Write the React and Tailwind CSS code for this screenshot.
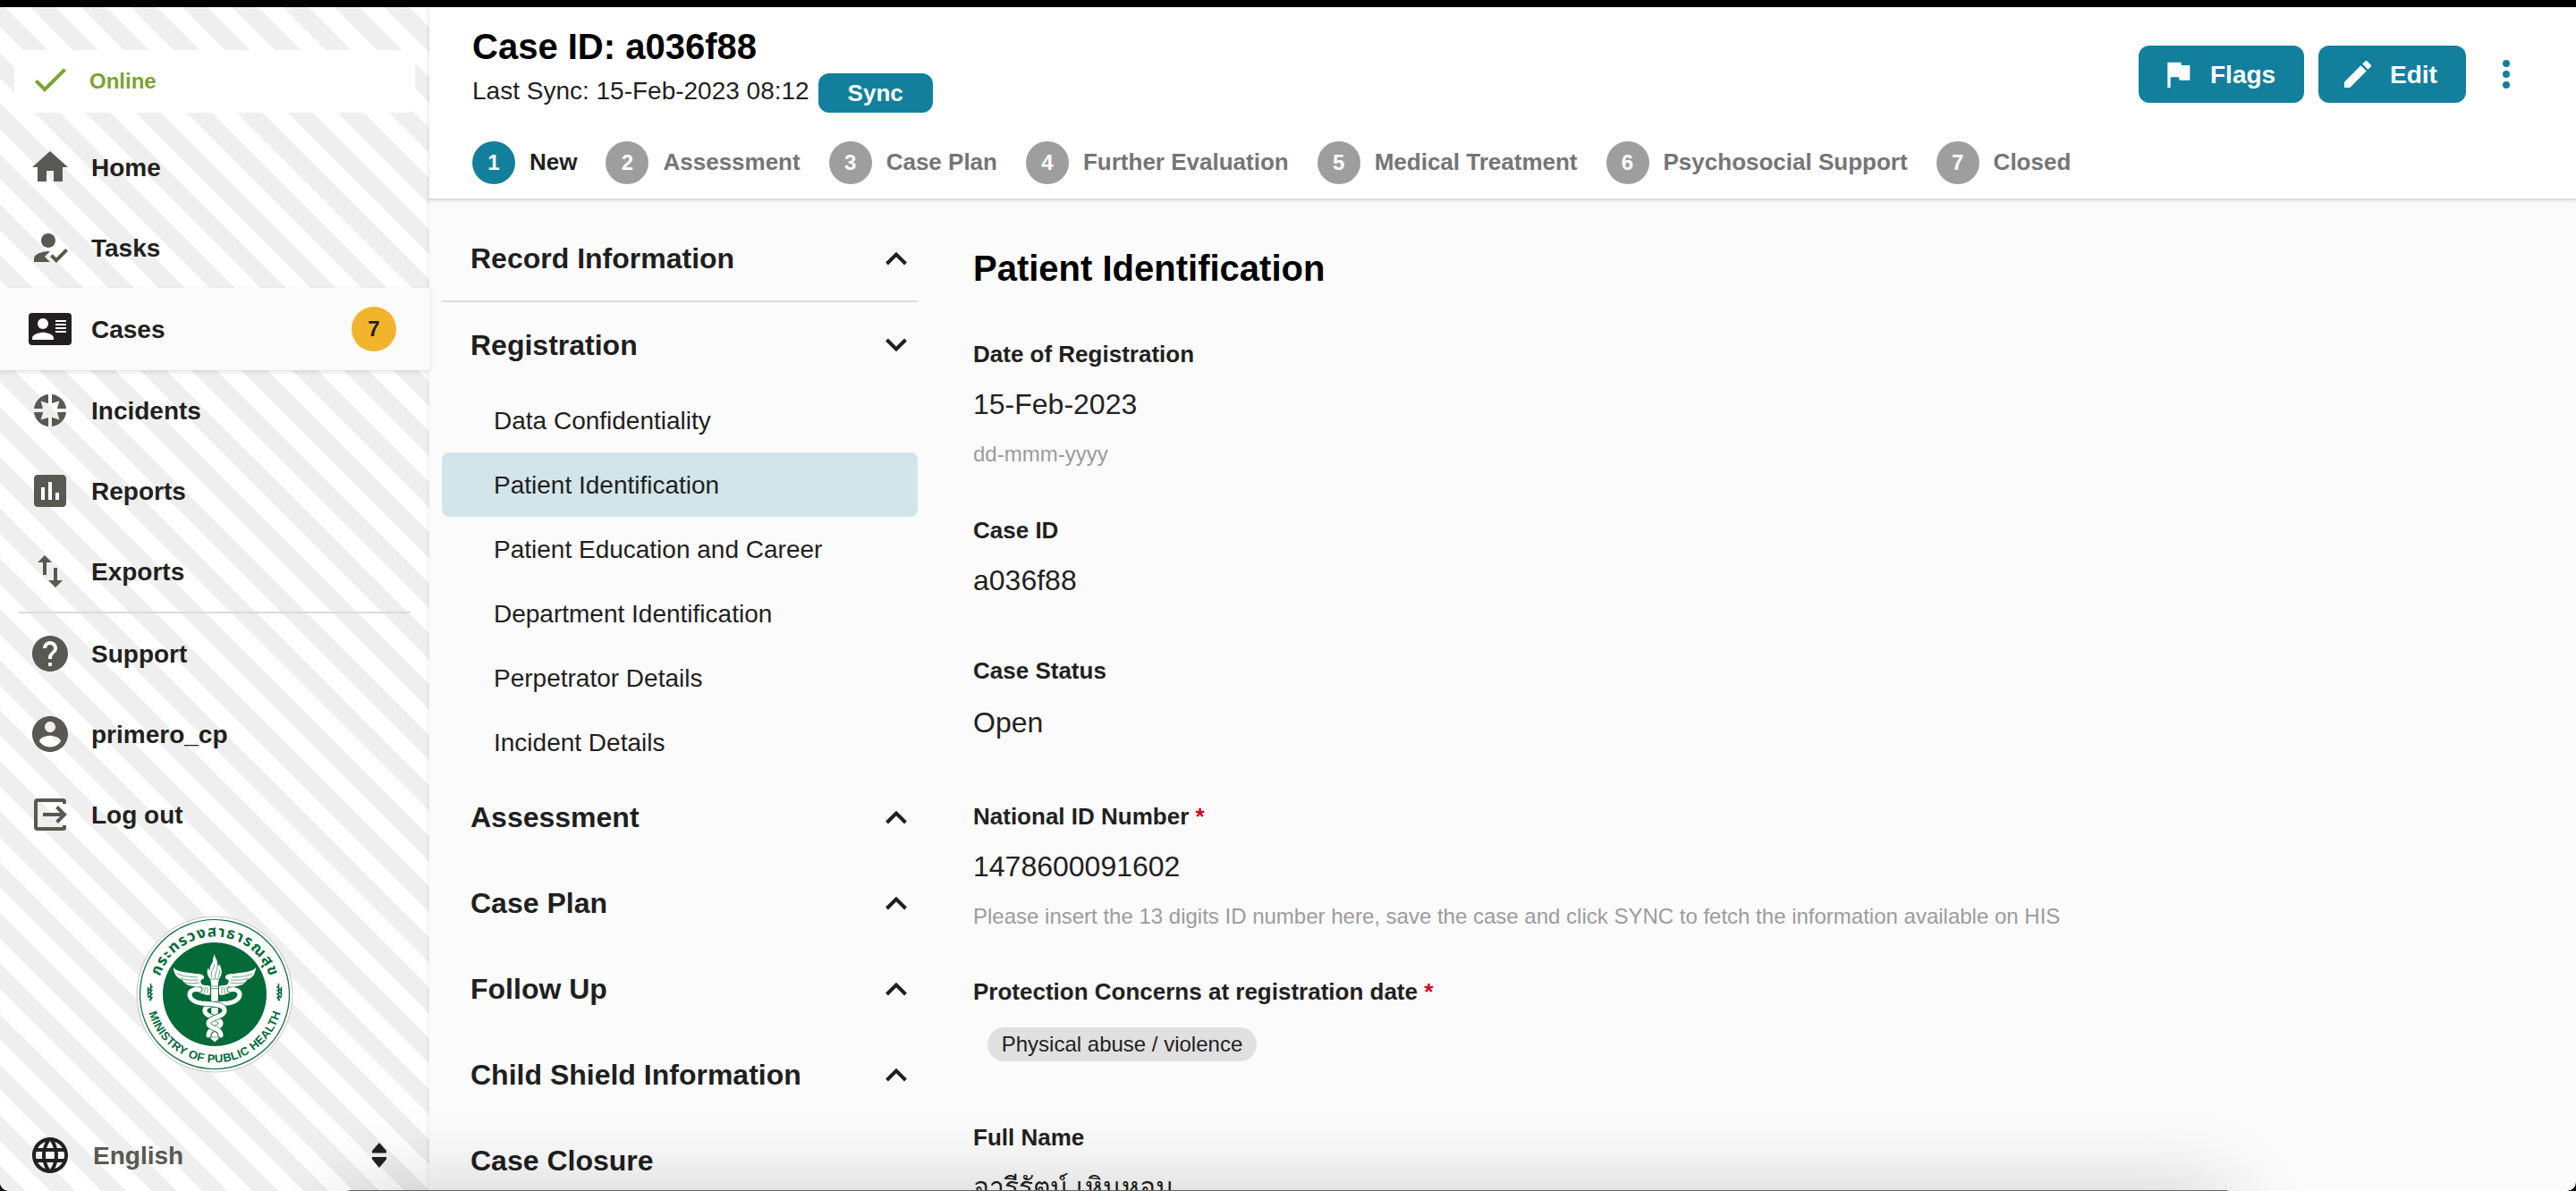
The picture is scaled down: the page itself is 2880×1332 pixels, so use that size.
import React from "react";

const nav = [
  { label: "Home", d: "M10 20v-6h4v6h5v-8h3L12 3 2 12h3v8z" },
  { label: "Tasks", d: "M9 17l3-2.94c-.39-.04-.68-.06-1-.06-2.67 0-8 1.34-8 4v2h9l-3-3zm2-5c2.210 0 4-1.790 4-4s-1.790-4-4-4-4 1.790-4 4 1.790 4 4 4M15.470 20.500L12 17l1.400-1.410 2.070 2.080 5.130-5.170 1.400 1.410z" },
  { label: "Cases", active: true },
  { label: "Incidents", burst: true },
  { label: "Reports", d: "M19 3H5c-1.100 0-2 .9-2 2v14c0 1.100.9 2 2 2h14c1.100 0 2-.9 2-2V5c0-1.100-.9-2-2-2zM9 17H7v-7h2v7zm4 0h-2V7h2v10zm4 0h-2v-4h2v4z" },
  { label: "Exports", d: "M9 3L5 6.990h3V14h2V6.990h3L9 3zm7 14.010V10h-2v7.010h-3L15 21l4-3.990h-3z" },
];
const nav2 = [
  { label: "Support", d: "M12 2C6.480 2 2 6.480 2 12s4.480 10 10 10 10-4.480 10-10S17.520 2 12 2zm1 17h-2v-2h2v2zm2.070-7.750l-.9.920C13.450 12.900 13 13.500 13 15h-2v-.5c0-1.100.45-2.100 1.170-2.830l1.240-1.260c.37-.36.59-.86.59-1.410 0-1.100-.9-2-2-2s-2 .9-2 2H8c0-2.210 1.790-4 4-4s4 1.790 4 4c0 .88-.36 1.680-.93 2.250z" },
  { label: "primero_cp", d: "M12 2C6.480 2 2 6.480 2 12s4.480 10 10 10 10-4.480 10-10S17.520 2 12 2zm0 3c1.660 0 3 1.340 3 3s-1.340 3-3 3-3-1.340-3-3 1.340-3 3-3zm0 14.200c-2.500 0-4.710-1.280-6-3.220.03-1.990 4-3.080 6-3.080 1.990 0 5.970 1.090 6 3.080-1.290 1.940-3.500 3.220-6 3.220z" },
  { label: "Log out", logout: true },
];

function NavIcon({ item }) {
  if (item.active)
    return (
      <svg viewBox="0 0 48 36" className="h-9 w-12 shrink-0">
        <rect width="48" height="36" rx="4" fill="#231f20" />
        <circle cx="16" cy="12" r="6" fill="#fff" />
        <path d="M4 30v-2c0-4 8-6.200 12-6.200s12 2.200 12 6.200v2z" fill="#fff" />
        <path d="M30 8h12v2H30zm0 4h12v2H30zm0 4h12v2H30zm0 4h12v2H30z" fill="#fff" />
      </svg>
    );
  if (item.burst)
    return (
      <svg viewBox="0 0 36 36" className="mx-1.5 size-9 shrink-0" fill="#595952">
        {[0, 90, 180, 270].map((a) => (
          <path key={a} transform={`rotate(${a} 18 18)`} d="M16 0A18 18 0 0 0 0 16L10 16 7.600 7.600 16 10.200z" />
        ))}
      </svg>
    );
  if (item.logout)
    return (
      <svg viewBox="0 0 38 36" className="ml-1.5 mr-1 h-9 w-[38px] shrink-0" fill="none" stroke="#595952" strokeWidth="4">
        <path d="M34 6V3.500Q34 2 32.500 2H4Q2 2 2 4V32Q2 34 4 34H32.500Q34 34 34 32.500V30" />
        <path d="M10 18H34M25.500 9.500L34 18L25.500 26.500" />
      </svg>
    );
  return (
    <svg viewBox="0 0 24 24" className="size-12 shrink-0" fill="#595952">
      <path d={item.d} />
    </svg>
  );
}

function NavItem({ item }) {
  return (
    <div className={item.active
      ? "flex h-[92px] items-center bg-[#fbfbfb] pl-8 pr-[37px] shadow-[0_2px_5px_rgba(0,0,0,0.12)] relative"
      : "flex h-[90px] items-center pl-8"}>
      <NavIcon item={item} />
      <span className="ml-[22px] pt-0.5 text-[28px] font-bold leading-none">{item.label}</span>
      {item.active && (
        <span className="ml-auto flex size-[50px] items-center justify-center rounded-full bg-[#f2b42d] text-2xl font-bold">7</span>
      )}
    </div>
  );
}

const snakes = [
  "M104 83C119 80 119 96 102 98C84 99 75 100 76 107C77 114 95 114 94 121C93 127 80 125 80 134",
  "M70 83C55 80 55 96 72 98C90 99 99 100 98 107C97 114 79 114 80 121C81 127 94 125 94 134",
];

function Seal() {
  return (
    <svg viewBox="0 0 176 176" className="size-[176px]">
      <defs>
        <path id="seal-top" d="M23.500 88A64.500 64.500 0 0 1 152.500 88" />
        <path id="seal-bottom" d="M11.500 88A76.500 76.500 0 0 0 164.500 88" />
      </defs>
      <circle cx="88" cy="88" r="87" fill="#fff" stroke="#b5b5b5" strokeWidth="0.8" />
      <circle cx="88" cy="88" r="83.500" fill="none" stroke="#046a38" strokeWidth="1.200" />
      <circle cx="88" cy="88" r="58" fill="#046a38" />
      <g fill="#046a38" fontWeight="bold" textAnchor="middle">
        <text fontSize="17" fontFamily="'Noto Sans Thai', 'Noto Sans', sans-serif">
          <textPath href="#seal-top" startOffset="50%" textLength="162">กระทรวงสาธารณสุข</textPath>
        </text>
        <text fontSize="13" fontFamily="Liberation Sans Narrow, Liberation Sans, sans-serif">
          <textPath href="#seal-bottom" startOffset="50%" textLength="198">MINISTRY OF PUBLIC HEALTH</textPath>
        </text>
      </g>
      <g stroke="#046a38" strokeWidth="1.500" fill="none">
        <path d="M16.500 76V95M13.500 80V91M18.500 79L14 84M18.500 83L13 88M18.500 87L14 92M18.500 91L15 95" />
        <path d="M159.500 76V95M162.500 80V91M157.500 79L162 84M157.500 83L163 88M157.500 87L162 92M157.500 91L161 95" />
      </g>
      <g transform="translate(1 0)">
        <path d="M83 75L82 71C78 66 78 62 80 58C80 60 81 61 82 61C81 55 85 54 85 50C85 47 86 45 87 43C87 46 88 47 89 49C91 53 89 55 91 57C92 56 91.500 54 91 53C94 57 96 62 94 67L92 71 91 75z" fill="#fff" />
        <path d="M84 69C81 63 87 60 86.500 54M88 70C86 64 91 62 89.500 57M91 69C92 66 93 64 92.500 61M82 71H92" fill="none" stroke="#046a38" strokeWidth="0.600" />
        {["", "matrix(-1 0 0 1 174 0)"].map((t) => (
          <g key={t} transform={t || undefined}>
            <path d="M41 58C45 64 57 63 65 65C71 65 76 66 75 70C73 72 70 71 72 76C74 79 78 77 82 79V88C80 90 76 88 72 87C68 86 65 82 64 79C57 79 52 75 51 72C45 70 41 65 41 58z" fill="#fff" />
            <path d="M45 65C53 69 60 68 68 69M49 70C57 73 62 72 69 72M53 75C60 76 64 76 70 75M67 82C70 81 71 80 73 79M70 86L75 80M75 87L77 80M79 87V80" fill="none" stroke="#046a38" strokeWidth="0.600" />
          </g>
        ))}
        <path d="M83 75H91L90.500 135 92 137 87 141.500 82 137 83.500 135z" fill="#fff" />
        <path d="M83 79H91M83 81.500H91M82.500 136H91.500" stroke="#046a38" strokeWidth="0.600" />
        {snakes.map((d) => (
          <g key={d} fill="none" strokeLinecap="round">
            <path d={d} stroke="#046a38" strokeWidth="6.400" />
            <path d={d} stroke="#fff" strokeWidth="5" />
          </g>
        ))}
      </g>
    </svg>
  );
}

const steps = ["New", "Assessment", "Case Plan", "Further Evaluation", "Medical Treatment", "Psychosocial Support", "Closed"];

function Chevron({ down }) {
  return (
    <svg viewBox="0 0 24 16" className="h-4 w-6" fill="none" stroke="#1f1f1f" strokeWidth="4">
      <path d={down ? "M1.500 2L12 12.500L22.500 2" : "M1.500 14L12 3.500L22.500 14"} />
    </svg>
  );
}

function Group({ label, down, className = "h-24" }) {
  return (
    <div className={`flex items-center justify-between pl-8 pr-3 ${className}`}>
      <span className="text-[32px] font-bold leading-none">{label}</span>
      <Chevron down={down} />
    </div>
  );
}

const pages = ["Data Confidentiality", "Patient Identification", "Patient Education and Career", "Department Identification", "Perpetrator Details", "Incident Details"];

function Label({ children, required }) {
  return (
    <div className="h-8 text-[26px] font-bold leading-8 text-[#231f20]">
      {children}
      {required && <span className="text-[#d0021b]"> *</span>}
    </div>
  );
}

function Field({ label, value, help, required, className, valueClass = "mt-5 text-[32px]" }) {
  return (
    <div className={className}>
      <Label required={required}>{label}</Label>
      <div className={`h-10 leading-10 text-[#231f20] ${valueClass}`}>{value}</div>
      {help && <div className="mt-5 h-8 text-2xl leading-8 text-[#9b9b9b]">{help}</div>}
    </div>
  );
}

export default function App() {
  return (
    <div className="relative flex h-[1332px] w-[2880px] flex-col overflow-hidden bg-[#070a14] font-['Liberation_Sans',Arial,sans-serif] text-[#1f1f1f]">
      <div className="h-2 shrink-0 bg-black" />
      <div className="flex min-h-0 flex-1 overflow-hidden rounded-b-[10px] bg-[#fbfbfb]">
        <aside className="flex w-[480px] shrink-0 flex-col bg-[repeating-linear-gradient(45deg,#efefef_0_20px,#fff_20px_40px)] text-[#231f20]">
          <div className="mx-4 mt-12 flex h-[70px] items-center rounded-[10px] bg-white pl-4 text-[#7ba32f]">
            <svg viewBox="0 0 24 24" className="mb-1 size-12" fill="#7ba32f">
              <path d="M9 16.170L4.830 12l-1.420 1.410L9 19 21 7l-1.410-1.410z" />
            </svg>
            <span className="ml-5 text-2xl font-bold">Online</span>
          </div>
          <div className="mt-4">
            {nav.map((n) => <NavItem key={n.label} item={n} />)}
          </div>
          <div className="ml-[21px] mr-[21px] h-0.5 bg-[#dcdcd6]" />
          <div>{nav2.map((n) => <NavItem key={n.label} item={n} />)}</div>
          <div className="mt-[68px] flex justify-center"><Seal /></div>
          <div className="mt-auto mb-2 flex h-[64px] items-center pl-8">
            <svg viewBox="0 0 24 24" className="size-12" fill="#231f20">
              <path d="M11.990 2C6.470 2 2 6.480 2 12s4.470 10 9.990 10C17.520 22 22 17.520 22 12S17.520 2 11.990 2zm6.930 6h-2.950c-.32-1.250-.78-2.450-1.380-3.560 1.840.63 3.370 1.910 4.330 3.560zM12 4.040c.83 1.200 1.480 2.530 1.910 3.960h-3.820c.43-1.430 1.080-2.760 1.910-3.960zM4.260 14C4.100 13.360 4 12.690 4 12s.1-1.360.26-2h3.380c-.08.66-.14 1.320-.14 2 0 .68.060 1.340.14 2H4.260zm.82 2h2.950c.32 1.250.78 2.450 1.380 3.560-1.840-.63-3.370-1.900-4.330-3.560zm2.950-8H5.080c.96-1.660 2.490-2.930 4.330-3.560C8.810 5.550 8.350 6.750 8.030 8zM12 19.960c-.83-1.200-1.480-2.530-1.910-3.960h3.820c-.43 1.430-1.080 2.760-1.910 3.960zM14.340 14H9.660c-.09-.66-.16-1.320-.16-2 0-.68.070-1.350.16-2h4.680c.09.65.16 1.320.16 2 0 .68-.07 1.340-.16 2zm.25 5.560c.6-1.110 1.060-2.310 1.380-3.560h2.950c-.96 1.650-2.490 2.930-4.330 3.560zM16.360 14c.08-.66.14-1.320.14-2 0-.68-.06-1.340-.14-2h3.380c.16.64.26 1.310.26 2s-.1 1.360-.26 2h-3.380z" />
            </svg>
            <span className="ml-6 pt-0.5 text-[28px] font-bold leading-none text-[#595952]">English</span>
            <svg viewBox="0 0 16 28" className="ml-auto mr-12 h-7 w-4" fill="#231f20"><path d="M8 0L16 9V11.500H0V9zM0 16H16V18.500L8 28 0 18.500z" /></svg>
          </div>
        </aside>
        <main className="flex min-w-0 flex-1 flex-col shadow-[-1px_0_5px_rgba(0,0,0,0.08)]">
          <header className="flex h-[216px] shrink-0 border-b-2 border-[#dcdcd6] bg-white pl-12 shadow-[0_2px_4px_rgba(0,0,0,0.06)]">
            <div className="flex flex-col">
              <h1 className="mt-[23px] text-[40px] font-bold leading-[42px] text-black">Case ID: a036f88</h1>
              <div className="mt-[9px] flex h-11">
                <span className="mt-1 text-[28px] leading-8">Last Sync: 15-Feb-2023 08:12</span>
                <span className="ml-[10px] flex h-11 w-32 items-center justify-center rounded-xl bg-[#12809d] text-[26px] font-bold text-white">Sync</span>
              </div>
              <div className="mt-8 flex gap-8">
                {steps.map((s, i) => (
                  <div key={s} className="flex items-center">
                    <span className={`flex size-12 items-center justify-center rounded-full text-2xl font-bold text-white ${i ? "bg-[#9e9e9e]" : "bg-[#12809d]"}`}>{i + 1}</span>
                    <span className={`ml-4 pb-0.5 text-[26px] font-bold ${i ? "text-[#757575]" : "text-[#1f1f1f]"}`}>{s}</span>
                  </div>
                ))}
              </div>
            </div>
            <div className="ml-auto mr-[74px] mt-[43px] flex h-16 items-center gap-4 text-[28px] font-bold text-white">
              <div className="flex h-16 w-[185px] items-center rounded-xl bg-[#12809d] pl-6">
                <svg viewBox="0 0 24 24" className="size-10" fill="#fff"><path d="M14.400 6L14 4H5v17h2v-7h5.600l.4 2h7V6z" /></svg>
                <span className="ml-4 pt-0.5 leading-none">Flags</span>
              </div>
              <div className="flex h-16 w-[165px] items-center rounded-xl bg-[#12809d] pl-6">
                <svg viewBox="0 0 24 24" className="size-10" fill="#fff"><path d="M3 17.250V21h3.750L17.810 9.940l-3.750-3.750L3 17.250zM20.710 7.040c.39-.39.39-1.020 0-1.410l-2.340-2.340c-.39-.39-1.020-.39-1.410 0l-1.830 1.830 3.750 3.750 1.830-1.830z" /></svg>
                <span className="ml-4 pt-0.5 leading-none">Edit</span>
              </div>
              <svg viewBox="0 0 8 32" className="ml-[25px] h-8 w-2" fill="#12809d"><circle cx="4" cy="4" r="4" /><circle cx="4" cy="16" r="4" /><circle cx="4" cy="28" r="4" /></svg>
            </div>
          </header>
          <div className="flex min-h-0 flex-1 overflow-hidden">
            <nav className="ml-3.5 w-[532px] shrink-0">
              <Group label="Record Information" className="mt-[18px] h-24 border-b-2 border-[#dcdcdc]" />
              <Group label="Registration" down />
              {pages.map((p, i) => (
                <div key={p} className={`flex h-[72px] items-center rounded-lg pl-[58px] pt-0.5 text-[28px] ${i === 1 ? "bg-[#d2e5ea]" : ""}`}>{p}</div>
              ))}
              {["Assessment", "Case Plan", "Follow Up", "Child Shield Information"].map((g) => <Group key={g} label={g} />)}
              <div className="flex h-24 items-center pl-8 text-[32px] font-bold leading-none">Case Closure</div>
            </nav>
            <section className="ml-[62px]">
              <h2 className="mt-[52px] text-[40px] font-bold leading-[48px] text-black">Patient Identification</h2>
              <Field className="mt-[56px]" label="Date of Registration" value="15-Feb-2023" help="dd-mmm-yyyy" />
              <Field className="mt-[53px]" label="Case ID" value="a036f88" />
              <Field className="mt-[65px]" label="Case Status" value="Open" valueClass="mt-[22px] text-[32px]" />
              <Field className="mt-[69px]" label="National ID Number" required value="1478600091602" help="Please insert the 13 digits ID number here, save the case and click SYNC to fetch the information available on HIS" />
              <div className="mt-[52px]">
                <Label required>Protection Concerns at registration date</Label>
                <div className="ml-4 mt-6 flex h-[38px] w-[301px] items-center justify-center rounded-full bg-[#e0e0e0] text-2xl">Physical abuse / violence</div>
              </div>
              <Field className="mt-[69px]" label="Full Name" value="อารีรัตน์ เหินหอม" valueClass="mt-5 text-[30px]" />
            </section>
          </div>
        </main>
      </div>
      {/* top edge of the window dock, with its soft shadow cast upwards */}
      <div className="absolute left-[390px] top-[1331px] h-[300px] w-[2100px] bg-[#666] shadow-[0_0_90px_rgba(0,0,0,0.18)]" />
    </div>
  );
}
